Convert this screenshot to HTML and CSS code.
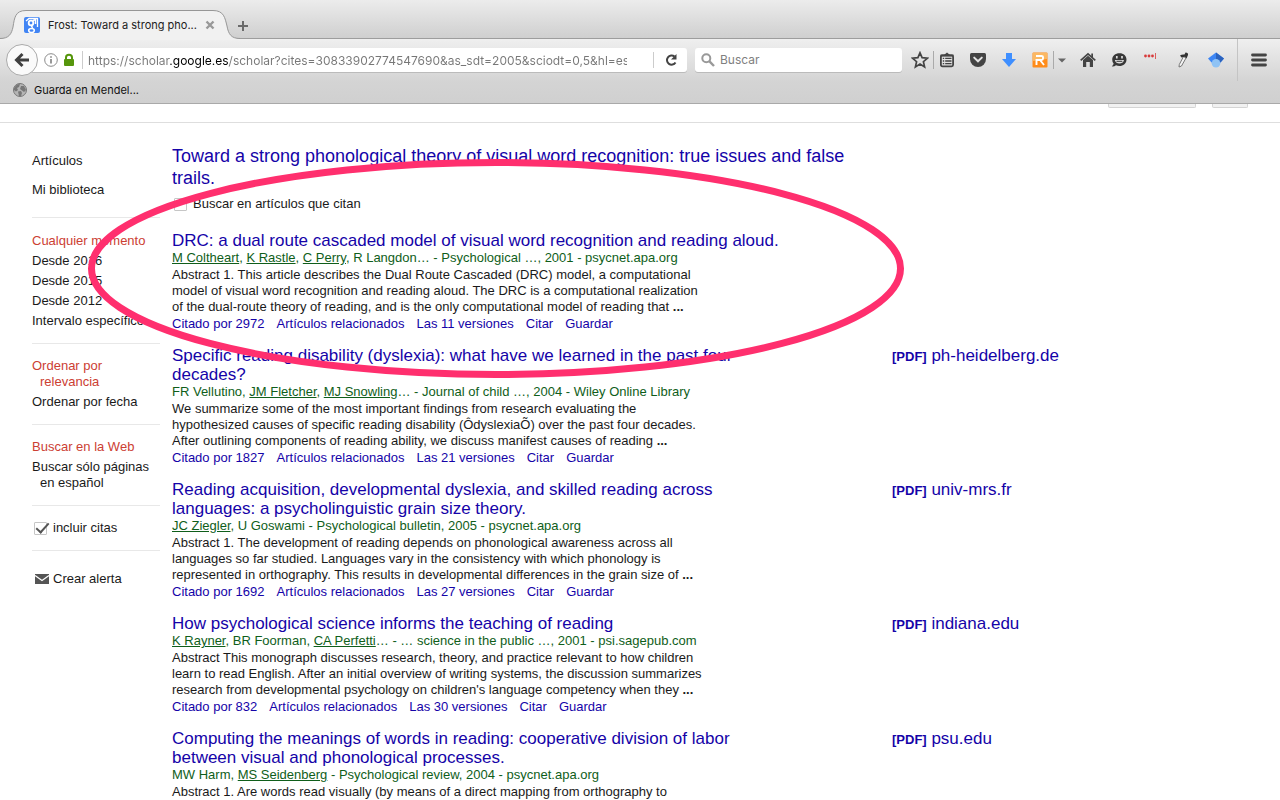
FILE: index.html
```html
<!DOCTYPE html>
<html lang="es">
<head>
<meta charset="utf-8">
<title>Frost: Toward a strong phonological theory</title>
<link rel="stylesheet" href="styles.css">
</head>
<body>
<header class="chrome">
  <div class="tabs">
    <div class="tab">
      <svg class="tab-shape" viewBox="0 0 240 30" width="240" height="30" aria-hidden="true">
        <path d="M0 28.500C9 28.500 11.500 24 13 17C14.500 8 15 .5 26 .5H213C224 .5 225 8 227 16C228.500 24 231 28.500 240 28.500V30H0Z" fill="#f1f1f1"/>
        <path d="M0 28.500C9 28.500 11.500 24 13 17C14.500 8 15 .5 26 .5H213C224 .5 225 8 227 16C228.500 24 231 28.500 240 28.500" fill="none" stroke="#979797"/>
      </svg>
      <svg class="tab-icon" viewBox="0 0 16 16" width="16" height="16" aria-hidden="true">
        <rect width="16" height="16" rx="2" fill="#4285f4"/>
        <path d="M2 4L5 1.500H13.500V10" fill="none" stroke="#fff" stroke-width="1.300"/>
        <circle cx="7" cy="6" r="2.300" fill="none" stroke="#fff" stroke-width="1.800"/>
        <path d="M9 3.500L11.500 2.500V7M8.500 8Q6.500 9.500 9 10.500" fill="none" stroke="#fff" stroke-width="1.500"/>
        <ellipse cx="7.500" cy="13.500" rx="2.800" ry="2" fill="none" stroke="#fff" stroke-width="1.600"/>
      </svg>
      <span class="tab-title">Frost: Toward a strong pho...</span>
      <button class="icon-btn tab-close" aria-label="Cerrar pestaña"><svg viewBox="0 0 10 10" width="10" height="10"><path d="M1.500 1.500L8.500 8.500M8.500 1.500L1.500 8.500" stroke="#999" stroke-width="2.400"/></svg></button>
    </div>
    <button class="icon-btn new-tab" aria-label="Nueva pestaña"><svg viewBox="0 0 12 12" width="12" height="12"><path d="M6 1V11M1 6H11" stroke="#6b6b6b" stroke-width="2"/></svg></button>
  </div>
  <div class="toolbar">
    <button class="back" aria-label="Atrás"><svg viewBox="0 0 16 16" width="16" height="16"><path d="M8.500 2L2.500 8L8.500 14M3 8H15" fill="none" stroke="#404040" stroke-width="3"/></svg></button>
    <div class="urlbar">
      <svg class="info" viewBox="0 0 14 14" width="14" height="14" aria-hidden="true"><circle cx="7" cy="7" r="6.300" fill="none" stroke="#8b8b8b"/><path d="M7 6V10.500M7 3.200V4.800" stroke="#777" stroke-width="1.500"/></svg>
      <svg class="lock" viewBox="0 0 12 14" width="12" height="14" aria-hidden="true"><path d="M3 7V4.500C3 .8 9 .8 9 4.500V7" fill="none" stroke="#56960c" stroke-width="2"/><rect x="1" y="6" width="10" height="7" rx="1" fill="#56960c"/></svg>
      <input class="url" type="text" aria-label="Dirección" value="https://scholar.google.es/scholar?cites=30833902774547690&amp;as_sdt=2005&amp;sciodt=0,5&amp;hl=es">
      <button class="icon-btn reload" aria-label="Recargar"><svg viewBox="0 0 14 14" width="14" height="14"><path d="M11.500 9.500A4.600 4.600 0 1 1 10.500 3.500" fill="none" stroke="#444" stroke-width="2"/><path d="M12.500 1V6.500H7Z" fill="#444"/></svg></button>
    </div>
    <label class="search">
      <svg viewBox="0 0 14 14" width="14" height="14" aria-hidden="true"><circle cx="5.300" cy="5.300" r="4" fill="none" stroke="#999" stroke-width="2"/><path d="M8.200 8.200L13 13" stroke="#999" stroke-width="2.400"/></svg>
      <input type="search" placeholder="Buscar" aria-label="Buscar">
    </label>
    <div class="tools">
      <div class="pair">
        <button class="icon-btn tool" aria-label="Añadir a marcadores"><svg viewBox="0 0 18 18" width="18" height="18"><path d="M9 1.800L11.100 6.700L16.400 7.200L12.400 10.700L13.600 15.900L9 13.100L4.400 15.900L5.600 10.700L1.600 7.200L6.900 6.700Z" fill="none" stroke="#444" stroke-width="1.700"/></svg></button>
        <i class="rule"></i>
        <button class="icon-btn tool" aria-label="Marcadores"><svg viewBox="0 0 16 16" width="16" height="16"><path d="M5 3L8 .5L11 3Z" fill="#444"/><rect x="1.900" y="3.300" width="12.200" height="11" rx="1.500" fill="none" stroke="#444" stroke-width="1.800"/><path d="M1.500 3.500H14.500" stroke="#444" stroke-width="2"/><path d="M3.800 6.400H5.200M3.800 9H5.200M3.800 11.600H5.200M6.200 6.400H12.500M6.200 9H12.500M6.200 11.600H12.500" stroke="#444" stroke-width="1.400"/></svg></button>
      </div>
      <button class="icon-btn tool" aria-label="Pocket"><svg viewBox="0 0 16 16" width="16" height="16"><path d="M1.500 1H14.500Q16 1 16 2.500V7A8 8 0 0 1 0 7V2.500Q0 1 1.500 1Z" fill="#444"/><path d="M4.200 5.600L8 9.300L11.800 5.600" fill="none" stroke="#e3e3e3" stroke-width="2" stroke-linecap="round"/></svg></button>
      <button class="icon-btn tool" aria-label="Descargas"><svg viewBox="0 0 16 16" width="16" height="16"><path d="M5 1H11V7H15L8 15L1 7H5Z" fill="#3f8fff"/></svg></button>
      <div class="pair">
        <button class="icon-btn tool" aria-label="RefWorks"><svg viewBox="0 0 16 16" width="16" height="16"><rect x=".5" y=".5" width="15" height="15" rx="1" fill="#ff8c1a"/><path d="M1 1H15V7L1 9Z" fill="#fbb862"/><path d="M4.500 13V8H9.500Q11 8 11 6.500V5Q11 4 9.500 4H4M8 8L12 13" fill="none" stroke="#fff" stroke-width="1.900"/></svg></button>
        <i class="rule"></i>
        <button class="icon-btn caret" aria-label="Más opciones"><svg viewBox="0 0 8 5" width="8" height="5"><path d="M0 .5H8L4 4.500Z" fill="#666"/></svg></button>
      </div>
      <button class="icon-btn tool" aria-label="Inicio"><svg viewBox="0 0 16 16" width="16" height="16"><path d="M3 8L8 3.700L13 8V15H9.800V10H6.200V15H3Z" fill="#444"/><path d="M.7 8.300L8 1.800L15.300 8.300" fill="none" stroke="#444" stroke-width="1.700"/><path d="M11.300 1.500H13V6L11.300 4.500Z" fill="#444"/></svg></button>
      <button class="icon-btn tool" aria-label="Hello"><svg viewBox="0 0 16 16" width="16" height="16"><path d="M8.500 1.200C12.700 1.200 15.500 3.800 15.500 7.500C15.500 11.500 12.300 14 8.500 14Q6.500 14 5 13.200Q3 14.700 .8 14.300Q2.500 13.300 2.600 11.600Q1.200 10 1.200 7.500C1.200 3.800 4.300 1.200 8.500 1.200Z" fill="#383838"/><path d="M5.800 4V6.500M11 4V6.500" stroke="#ddd" stroke-width="1.700"/><path d="M3.800 8H13C12.200 12.700 4.700 12.700 3.800 8Z" fill="#ddd"/><path d="M5.500 9.300H11.300" stroke="#383838"/></svg></button>
      <button class="icon-btn tool" aria-label="LastPass"><svg viewBox="0 0 16 16" width="16" height="16"><g fill="#d83b3b"><circle cx="3.500" cy="4" r="1.400"/><circle cx="7" cy="4" r="1.400"/><circle cx="10.500" cy="4" r="1.400"/><path d="M13 1H13.800V7H13Z"/></g></svg></button>
      <div class="pair wide">
        <button class="icon-btn tool" aria-label="Cuentagotas"><svg viewBox="0 0 16 16" width="16" height="16"><path d="M8.500 4.500L4.300 12.500L4 15L6.500 14L11 6Z" fill="#f4f4f4" stroke="#777"/><path d="M5 3.500Q7 2 9.500 2.500L10.500 .5Q13.500 .5 13 3L11.500 6.500L10 4.800L6.500 5.500Z" fill="#333"/></svg></button>
        <button class="icon-btn tool" aria-label="Google Académico"><svg viewBox="0 0 16 16" width="16" height="16"><path d="M8 .5L16 6.500L12.500 10.500H3.500L0 6.500Z" fill="#3d86f5"/><path d="M8 .5L16 6.500L12.500 10.500L8 8Z" fill="#2c63be"/><circle cx="8" cy="11.200" r="4.300" fill="#8fc3f5"/></svg></button>
      </div>
    </div>
    <button class="icon-btn menu" aria-label="Abrir menú"><svg viewBox="0 0 16 14" width="16" height="14"><path d="M1.500 2H14.500M1.500 7H14.500M1.500 12H14.500" stroke="#444" stroke-width="2.800" stroke-linecap="round"/></svg></button>
  </div>
  <nav class="bookmarks" aria-label="Marcadores">
    <a href="#"><svg viewBox="0 0 14 14" width="14" height="14" aria-hidden="true"><circle cx="7" cy="7" r="6.500" fill="#b5b5b5" stroke="#777"/><path d="M1 5L4 1.500L7 1L6 4L4 5L5 7L3 8.500L1 7ZM8 3L11 3L13 7L11 9L9 7.500L7 6ZM5 8.500L8 8L9 10L8 13L6 13Z" fill="#777"/></svg><span>Guarda en Mendel...</span></a>
  </nav>
</header>

<div class="page">
  <div class="page-head"><button class="stub stub-wide" aria-label="Mis citas"></button><button class="stub" aria-label="Configuración"></button></div>
  <div class="columns">
    <aside class="side">
      <ul class="group sections"><li><a href="#">Artículos</a></li><li><a href="#">Mi biblioteca</a></li></ul>
      <ul class="group dates"><li><a href="#" class="on">Cualquier momento</a></li><li><a href="#">Desde 2016</a></li><li><a href="#">Desde 2015</a></li><li><a href="#">Desde 2012</a></li><li><a href="#">Intervalo específico...</a></li></ul>
      <ul class="group order"><li><a href="#" class="on">Ordenar por relevancia</a></li><li><a href="#">Ordenar por fecha</a></li></ul>
      <ul class="group order"><li><a href="#" class="on">Buscar en la Web</a></li><li><a href="#">Buscar sólo páginas en español</a></li></ul>
      <div class="group single"><label class="check"><input type="checkbox" checked><span>incluir citas</span></label></div>
      <div class="group single alert"><a href="#"><svg viewBox="0 0 14 10" width="14" height="10" aria-hidden="true"><rect width="14" height="10" fill="#555"/><path d="M0 1.500L7 6.500L14 1.500" fill="none" stroke="#fff" stroke-width="1.300"/></svg><span>Crear alerta</span></a></div>
    </aside>
    <main class="results">
      <div class="subject">
        <h1><a href="#">Toward a strong phonological theory of visual word recognition: true issues and false<br>trails.</a></h1>
        <label class="check"><input type="checkbox"><span>Buscar en artículos que citan</span></label>
      </div>

      <article class="result">
        <div class="body">
          <h2><a href="#">DRC: a dual route cascaded model of visual word recognition and reading aloud.</a></h2>
          <p class="by"><a href="#">M Coltheart</a>, <a href="#">K Rastle</a>, <a href="#">C Perry</a>, R Langdon… - Psychological …, 2001 - psycnet.apa.org</p>
          <p class="text">Abstract 1. This article describes the Dual Route Cascaded (DRC) model, a computational<br>model of visual word recognition and reading aloud. The DRC is a computational realization<br>of the dual-route theory of reading, and is the only computational model of reading that <b>...</b></p>
          <p class="links"><a href="#">Citado por 2972</a><a href="#">Artículos relacionados</a><a href="#">Las 11 versiones</a><a href="#">Citar</a><a href="#">Guardar</a></p>
        </div>
      </article>

      <article class="result">
        <div class="body">
          <h2><a href="#">Specific reading disability (dyslexia): what have we learned in the past four<br>decades?</a></h2>
          <p class="by">FR Vellutino, <a href="#">JM Fletcher</a>, <a href="#">MJ Snowling</a>… - Journal of child …, 2004 - Wiley Online Library</p>
          <p class="text">We summarize some of the most important findings from research evaluating the<br>hypothesized causes of specific reading disability (ÔdyslexiaÕ) over the past four decades.<br>After outlining components of reading ability, we discuss manifest causes of reading <b>...</b></p>
          <p class="links"><a href="#">Citado por 1827</a><a href="#">Artículos relacionados</a><a href="#">Las 21 versiones</a><a href="#">Citar</a><a href="#">Guardar</a></p>
        </div>
        <a class="pdf" href="#"><b>[PDF]</b> ph-heidelberg.de</a>
      </article>

      <article class="result">
        <div class="body">
          <h2><a href="#">Reading acquisition, developmental dyslexia, and skilled reading across<br>languages: a psycholinguistic grain size theory.</a></h2>
          <p class="by"><a href="#">JC Ziegler</a>, U Goswami - Psychological bulletin, 2005 - psycnet.apa.org</p>
          <p class="text">Abstract 1. The development of reading depends on phonological awareness across all<br>languages so far studied. Languages vary in the consistency with which phonology is<br>represented in orthography. This results in developmental differences in the grain size of <b>...</b></p>
          <p class="links"><a href="#">Citado por 1692</a><a href="#">Artículos relacionados</a><a href="#">Las 27 versiones</a><a href="#">Citar</a><a href="#">Guardar</a></p>
        </div>
        <a class="pdf" href="#"><b>[PDF]</b> univ-mrs.fr</a>
      </article>

      <article class="result">
        <div class="body">
          <h2><a href="#">How psychological science informs the teaching of reading</a></h2>
          <p class="by"><a href="#">K Rayner</a>, BR Foorman, <a href="#">CA Perfetti</a>… - … science in the public …, 2001 - psi.sagepub.com</p>
          <p class="text">Abstract This monograph discusses research, theory, and practice relevant to how children<br>learn to read English. After an initial overview of writing systems, the discussion summarizes<br>research from developmental psychology on children's language competency when they <b>...</b></p>
          <p class="links"><a href="#">Citado por 832</a><a href="#">Artículos relacionados</a><a href="#">Las 30 versiones</a><a href="#">Citar</a><a href="#">Guardar</a></p>
        </div>
        <a class="pdf" href="#"><b>[PDF]</b> indiana.edu</a>
      </article>

      <article class="result">
        <div class="body">
          <h2><a href="#">Computing the meanings of words in reading: cooperative division of labor<br>between visual and phonological processes.</a></h2>
          <p class="by">MW Harm, <a href="#">MS Seidenberg</a> - Psychological review, 2004 - psycnet.apa.org</p>
          <p class="text">Abstract 1. Are words read visually (by means of a direct mapping from orthography to</p>
        </div>
        <a class="pdf" href="#"><b>[PDF]</b> psu.edu</a>
      </article>
    </main>
  </div>
  <svg class="mark" viewBox="0 0 816 219" width="816" height="219" aria-hidden="true"><ellipse cx="408" cy="109.500" rx="404.500" ry="106" fill="none" stroke="#ff2f6e" stroke-width="7"/></svg>
</div>
</body>
</html>
```

FILE: styles.css
```css
* { box-sizing: border-box; }
body {
  margin: 0;
  height: 100vh;
  display: flex;
  flex-direction: column;
  overflow: hidden;
  background: #fff;
  color: #1a1a1a;
  font: 13px/16px "Liberation Sans", Arial, sans-serif;
}
a { color: inherit; text-decoration: none; }
h1, h2, p, ul { margin: 0; padding: 0; font-weight: 400; }
ul { list-style: none; }
svg { display: block; flex: none; }
input { font: inherit; }

/* Browser window */
.chrome {
  flex: none;
  font-family: Inter, "Noto Sans", sans-serif;
  border-bottom: 1px solid #a9a9a9;
  background: #d2d2d2;
}
.icon-btn {
  display: flex;
  align-items: center;
  justify-content: center;
  padding: 0;
  border: 0;
  background: none;
}
.tabs {
  display: flex;
  height: 39px;
  align-items: flex-end;
  border-bottom: 1px solid #9d9d9d;
  background: linear-gradient(#ececec, #cfcfcf);
}
.tab {
  position: relative;
  display: flex;
  align-items: center;
  width: 240px;
  height: 29px;
  padding: 0 24px;
  margin-bottom: -1px;
}
.tab-shape { position: absolute; left: 0; top: 0; }
.tab-icon, .tab-title, .tab-close { position: relative; }
.tab-title { flex: 1; margin-left: 8px; font-size: 11px; color: #222; white-space: nowrap; }
.tab-close { width: 12px; }
.new-tab { height: 24px; margin-left: -3px; }

.toolbar {
  display: flex;
  align-items: center;
  height: 42px;
  padding: 0 9px 0 6px;
  background: linear-gradient(#efefef, #d4d4d4);
}
.back {
  position: relative;
  z-index: 1;
  flex: none;
  display: flex;
  align-items: center;
  justify-content: center;
  width: 32px;
  height: 32px;
  padding: 0;
  border: 1px solid #aaa;
  border-radius: 50%;
  background: #fafafa;
}
.urlbar, .search {
  display: flex;
  align-items: center;
  height: 24px;
  background: #fff;
  border-radius: 3px;
  box-shadow: 0 1px 0 #bbb;
}
.urlbar { flex: 1; min-width: 0; margin-left: -8px; padding-left: 14px; }
.lock { margin-left: 5px; }
.url {
  flex: 1;
  min-width: 0;
  height: 18px;
  margin: 0 26px 0 7px;
  padding: 0 0 0 5px;
  border: 0;
  border-left: 1px solid #ccc;
  outline: 0;
  font-size: 12px;
  color: #777;
  background: linear-gradient(to right, #777 87px, #000 87px 146px, #777 146px) text;
  -webkit-text-fill-color: transparent;
}
.reload { width: 34px; height: 16px; border-left: 1px solid #ccc; }
.search { flex: none; width: 207px; margin-left: 8px; padding: 0 6px; }
.search input {
  flex: 1;
  min-width: 0;
  margin-left: 5px;
  padding: 0;
  border: 0;
  outline: 0;
  font-size: 12px;
  background: none;
}
.search input::placeholder { color: #808080; }
.tools { display: flex; gap: 7px; margin: 0 9px 0 6px; }
.pair { display: flex; align-items: center; gap: 1px; }
.pair.wide { gap: 9px; margin-left: 2px; }
.rule { width: 1px; height: 18px; background: #aaa; }
.tool { width: 24px; height: 24px; }
.caret { width: 14px; }
.menu {
  width: 34px;
  height: 42px;
  padding-left: 8px;
  border-left: 1px solid #c4c4c4;
}
.bookmarks { height: 22px; padding: 0 13px; font-size: 11px; color: #111; background: linear-gradient(#d4d4d4, #d0d0d0); }
.bookmarks a { display: inline-flex; align-items: center; gap: 7px; height: 18px; }

/* Page */
.page { position: relative; flex: 1; min-height: 0; overflow: hidden; }
.page-head {
  display: flex;
  justify-content: flex-end;
  align-items: flex-start;
  gap: 16px;
  height: 19px;
  padding-right: 32px;
  border-bottom: 1px solid #dedede;
}
.stub {
  width: 36px;
  height: 4px;
  padding: 0;
  border: 1px solid #d4d4d4;
  border-top: 0;
  border-radius: 0 0 2px 2px;
  background: #f1f1f1;
}
.stub-wide { width: 88px; }
.columns { display: flex; gap: 12px; padding: 22px 32px 0; }
.side { flex: none; width: 128px; }
.group { border-bottom: 1px solid #e8e8e8; }
.group:last-child { border: 0; }
.on { color: #cc4033; }
.sections { padding: 8px 0 19px; }
.sections li + li { margin-top: 13px; }
.dates { padding: 13px 0 12px; white-space: nowrap; }
.dates li { line-height: 20px; }
.order { padding: 14px 0; }
.order li { padding-left: 8px; text-indent: -8px; }
.order li + li { margin-top: 4px; }
.single { padding: 14px 0; }
.alert { padding: 20px 3px; }
.alert a { display: flex; align-items: center; gap: 4px; }
.check { display: flex; align-items: center; gap: 6px; padding-left: 2px; }
.check input {
  appearance: none;
  width: 13px;
  height: 13px;
  margin: 0;
  border: 1px solid #c6c6c6;
  border-radius: 1px;
  position: relative;
}
.check input:checked::after {
  content: "";
  position: absolute;
  left: 4px;
  top: -3px;
  width: 5px;
  height: 11px;
  border: solid #555;
  border-width: 0 2px 2px 0;
  transform: rotate(42deg);
}

.results { flex: 1; min-width: 0; }
.subject { height: 86px; }
h1 { font-size: 18px; line-height: 22px; color: #1503a8; white-space: nowrap; }
.subject .check { margin-top: 7px; }
.result { display: flex; margin-bottom: 14px; white-space: nowrap; }
.body { flex: none; width: 720px; }
h2, .pdf { font-size: 17px; line-height: 19px; color: #1503a8; }
.pdf b { font-size: 13px; }
.by { margin-bottom: 2px; line-height: 15px; color: #0f5e1a; }
.by a { text-decoration: underline; }
.links { display: flex; gap: 12px; line-height: 17px; color: #1503a8; }

/* Highlight drawn over the first result */
.mark { position: absolute; left: 88px; top: 55px; }
```
